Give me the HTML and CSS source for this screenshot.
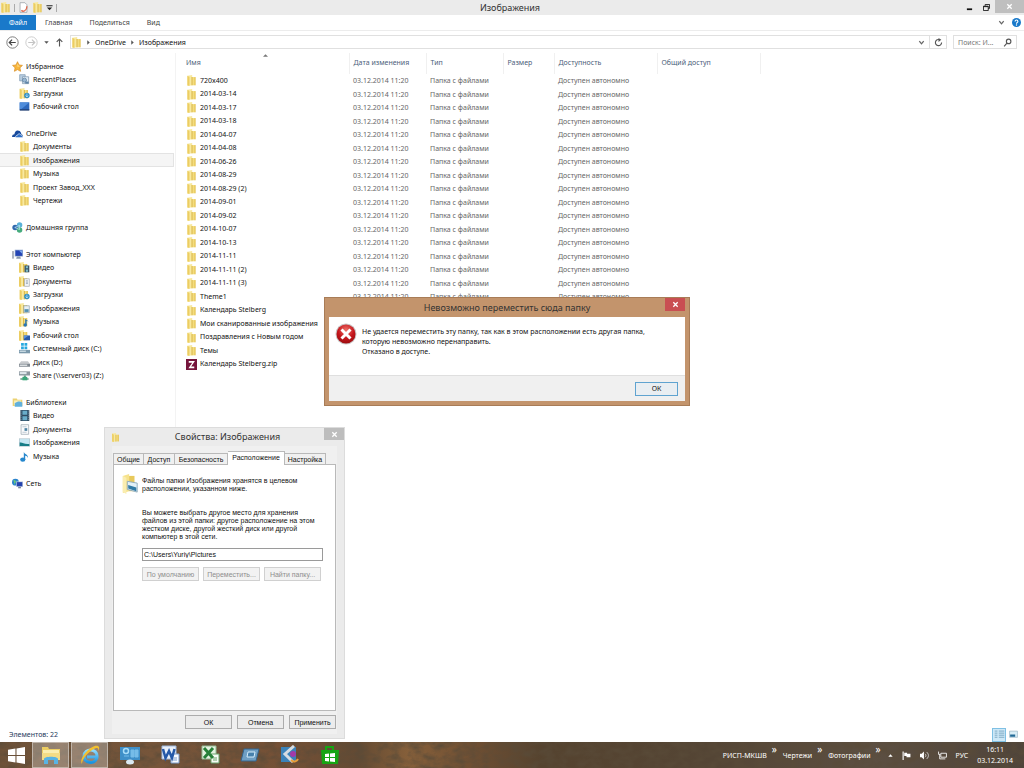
FILE: index.html
```html
<!DOCTYPE html>
<html lang="ru">
<head>
<meta charset="utf-8">
<title>Изображения</title>
<link rel="stylesheet" href="styles.css">
</head>
<body>
<svg class="defs" aria-hidden="true">
  <defs>
    <linearGradient id="gold" x1="0" x2="1"><stop offset="0" stop-color="#fbf0b0"/><stop offset=".5" stop-color="#f3dc7c"/><stop offset="1" stop-color="#e3bf48"/></linearGradient>
    <radialGradient id="red" cx=".5" cy=".3" r=".7"><stop offset="0" stop-color="#f0736a"/><stop offset=".6" stop-color="#c4161c"/><stop offset="1" stop-color="#9c0c10"/></radialGradient>
    <linearGradient id="ie" x1="0" y1="0" x2="0" y2="1"><stop offset="0" stop-color="#8fdcff"/><stop offset="1" stop-color="#1c94e0"/></linearGradient>
    <filter id="grain" x="0" y="0" width="1" height="1"><feTurbulence type="fractalNoise" baseFrequency=".09 .14" numOctaves="4" seed="4"/><feColorMatrix values="0 0 0 0 .1  0 0 0 0 .07  0 0 0 0 .04  1.600 0 0 0 -.55"/></filter>
  </defs>
  <symbol id="folder" viewBox="0 0 16 16"><path d="M2 1l7-1v15l-7 1z" fill="#f8e9a0"/><path d="M8 3h6v12H8z" fill="url(#gold)"/><path d="M2 1l3 2v13l-3-1z" fill="#eccd62"/><path d="M8 3h1.500v12H8z" fill="#d8b23e"/></symbol>
  <symbol id="star" viewBox="0 0 16 16"><path d="M8 1l2.200 4.800 5 .6-3.700 3.500 1 5.100L8 12.500 3.500 15l1-5.100L.8 6.400l5-.6z" fill="#f8b73e" stroke="#d88b1c"/><path d="M8 3.500l1.300 3.300 3 .5-4.300 1z" fill="#ffe59a"/></symbol>
  <symbol id="recent" viewBox="0 0 16 16"><path d="M1 1h8v9H1z" fill="#b9cfe2" stroke="#7d98b0"/><path d="M5 4h9v10H5z" fill="#e4eff8" stroke="#7790a8"/><circle cx="8" cy="9" r="3" fill="#9ab8d3" stroke="#5a7c9b"/><path d="M9 11h5v3H9z" fill="#5d83a6"/></symbol>
  <symbol id="down" viewBox="0 0 16 16"><use href="#folder" x="-1"/><circle cx="11.500" cy="11" r="4" fill="#2f8fc4"/><path d="M11.500 8v5M9.500 11l2 2 2-2" stroke="#cfeeff" fill="none"/></symbol>
  <symbol id="desk" viewBox="0 0 16 16"><path d="M1 2h14v11H1z" fill="#2e69bd"/><path d="M1 2h14L3 12H1z" fill="#4f8ddb"/><path d="M1 12h14v2H1z" fill="#1e3c70"/></symbol>
  <symbol id="cloud" viewBox="0 0 16 16"><path d="M0 13c0-3 2-4 3.500-4C4 5 7 2.500 9.500 4c2.500 0 4 3 4 5 1.500 0 2.500 1.500 2.500 4z" fill="#174a9c"/><path d="M5 14c0-3 2-3.500 3-3.500 1-3 4-2.500 5 0 2 0 3 1.500 3 3.500z" fill="#2e70c8" stroke="#fff"/></symbol>
  <symbol id="home" viewBox="0 0 16 16"><circle cx="11" cy="4.500" r="4" fill="#5ab1d8"/><circle cx="4.500" cy="8" r="4" fill="#3068ac"/><circle cx="11" cy="11.500" r="4" fill="#45ab7d"/><path d="M4 8l7-3v6z" stroke="#c7edf7" fill="none"/></symbol>
  <symbol id="pc" viewBox="0 0 16 16"><path d="M0 3h3v11H0z" fill="#adb4c1"/><path d="M4 1h12v10H4z" fill="#9eb2d0"/><path d="M5 2h10v8H5z" fill="#2444b4"/><path d="M10 2h5v5z" fill="#7fa9ec"/><path d="M7 11h5l1 3H6z" fill="#8a99ad"/></symbol>
  <symbol id="fvideo" viewBox="0 0 16 16"><use href="#folder" x="-2"/><path d="M8 5h7v10H8z" fill="#3b5566"/><path d="M10 6h3v3h-3zm0 5h3v3h-3z" fill="#7fc1cc"/></symbol>
  <symbol id="fdoc" viewBox="0 0 16 16"><use href="#folder" x="-2"/><path d="M8 4h7v11H8z" fill="#f4f6f8" stroke="#a2a8af"/><path d="M10 7h3M10 9h3M10 11h3" stroke="#7f93a8"/></symbol>
  <symbol id="fpic" viewBox="0 0 16 16"><use href="#folder" x="-2"/><path d="M7 4h8v10H7z" fill="#e9f0f4" stroke="#8fa0aa"/><path d="M8 9h6v4H8z" fill="#5391b2"/></symbol>
  <symbol id="fmusic" viewBox="0 0 16 16"><use href="#folder" x="-2"/><path d="M9 13V4l5 4-3-1v6z" fill="#2675b8"/><circle cx="9" cy="13" r="2.500" fill="#2675b8"/></symbol>
  <symbol id="fdesk" viewBox="0 0 16 16"><use href="#folder" x="-2"/><path d="M7 8h9v7H7z" fill="#2759a8"/><path d="M7 8h7l-7 5z" fill="#5b93dd"/></symbol>
  <symbol id="cdrive" viewBox="0 0 16 16"><path d="M3 0h4v4H3zM8 0h4v4H8zM3 5h4v4H3zM8 5h4v4H8z" fill="#27a9df"/><path d="M0 10h16v5H0z" fill="#7b99ac"/><path d="M1 11h9v2H1z" fill="#c9dbe4"/></symbol>
  <symbol id="drive" viewBox="0 0 16 16"><path d="M3 6h10l3 4v4H0v-4z" fill="#c6c9cc"/><path d="M0 10h16v4H0z" fill="#808890"/><path d="M1 11h11v2H1z" fill="#dfe3e6"/></symbol>
  <symbol id="share" viewBox="0 0 16 16"><path d="M0 2h16v6H0z" fill="#8a969e"/><path d="M1 3h10v3H1z" fill="#dfe8ec"/><path d="M7 8h3v4H7zM2 12h12v2H2z" fill="#5f9c84"/><path d="M5 10h7v5H5z" fill="#39a679"/></symbol>
  <symbol id="lib" viewBox="0 0 16 16"><path d="M1 2h6l1 2h7v9H1z" fill="#ecd272"/><path d="M3 5h10v7H3z" fill="#f8efbb"/><path d="M4 9c4-3 8-3 11-1v6H4z" fill="#61b0dc"/></symbol>
  <symbol id="film" viewBox="0 0 16 16"><path d="M2 0h13v16H2z" fill="#2e4c63"/><path d="M5 1h7v6H5zm0 8h7v6H5z" fill="#69adc9"/><path d="M3 1v14M14 1v14" stroke="#c6d7df" stroke-dasharray="1 2"/></symbol>
  <symbol id="doc" viewBox="0 0 16 16"><path d="M3 1h11v14H3z" fill="#fafbfc" stroke="#96a3ac"/><path d="M5 4h6M5 12h6" stroke="#a5b4c0"/><path d="M8 6h4v4H8z" fill="#4e83a3"/></symbol>
  <symbol id="pic" viewBox="0 0 16 16"><path d="M0 2h16v12H0z" fill="#b4c5cd"/><path d="M1 3h14v10H1z" fill="#c5e6f2"/><path d="M1 8c4-1 6 3 14 2v3H1z" fill="#167c86"/></symbol>
  <symbol id="note" viewBox="0 0 16 16"><path d="M7 12V1c1 4 7 4 6 9-1-3-4-3-4-3v6z" fill="#2587cd"/><ellipse cx="5.500" cy="12.500" rx="3.800" ry="3.200" fill="#2587cd"/></symbol>
  <symbol id="net" viewBox="0 0 16 16"><circle cx="5" cy="6" r="5" fill="#2a83cc"/><path d="M2 3c3 0 5 2 3 4s0 3-1 3z" fill="#67c67d"/><path d="M6 5h10v8H6z" fill="#bcc9de"/><path d="M7 6h8v6H7z" fill="#2442ae"/><path d="M9 13h4v2H9z" fill="#75849a"/></symbol>
  <symbol id="zip" viewBox="0 0 16 16"><path d="M0 0h16v16H0z" fill="#76153c"/><path d="M4 3h9l-5.500 8H12v2.500H3.500L9 5.500H4z" fill="#fff"/></symbol>
  <symbol id="x" viewBox="0 0 16 16"><path d="M3 3l10 10M13 3L3 13" stroke="currentColor" stroke-width="3" fill="none"/></symbol>
  <symbol id="chev" viewBox="0 0 16 16"><path d="M3 5l5 6 5-6" stroke="currentColor" stroke-width="3" fill="none"/></symbol>
  <symbol id="arrow" viewBox="0 0 16 16"><path d="M4 1l8 7-8 7z" fill="#555"/></symbol>
</svg>

<main class="explorer">
  <header class="titlebar">
    <div class="quick">
      <svg class="ic11"><use href="#folder"/></svg>
      <span class="bar"></span>
      <svg class="ic11" viewBox="0 0 16 16"><path d="M3 1h7l3 3v11H3z" fill="#fff" stroke="#90989f"/><path d="M5 12c2 3 8 1 8-6" stroke="#e0694e" stroke-width="2" fill="none"/></svg>
      <svg class="ic11"><use href="#folder"/></svg>
      <svg class="ic7" viewBox="0 0 16 16"><path d="M1 3h14v2H1zM2 8h12l-6 6z" fill="#222"/></svg>
      <span class="bar"></span>
    </div>
    <h1 class="wtitle">Изображения</h1>
    <div class="wbtns">
      <button class="wbtn" aria-label="Свернуть"><svg class="ic7" viewBox="0 0 16 16"><path d="M2 10h12v4H2z" fill="#111"/></svg></button>
      <button class="wbtn" aria-label="Восстановить"><svg class="ic7" viewBox="0 0 16 16"><path d="M5 4V1h10v9h-3M1 5h11v10H1zM1 6h11" fill="none" stroke="#111" stroke-width="2"/></svg></button>
      <button class="wbtn wclose" aria-label="Закрыть"><svg class="ic7"><use href="#x"/></svg></button>
    </div>
  </header>
  <nav class="ribbon">
    <button class="rtab file">Файл</button>
    <button class="rtab">Главная</button>
    <button class="rtab">Поделиться</button>
    <button class="rtab">Вид</button>
    <span class="grow"></span>
    <svg class="ic7 gray"><use href="#chev"/></svg>
    <svg class="ic9" viewBox="0 0 16 16"><circle cx="8" cy="8" r="8" fill="#1979ca"/><path d="M5.500 6c0-3.500 5-3 5 0 0 1.500-2.500 2-2.500 4" fill="none" stroke="#fff" stroke-width="2"/><circle cx="8" cy="12.500" r="1.200" fill="#fff"/></svg>
  </nav>
  <div class="address">
    <svg class="ic13" viewBox="0 0 16 16"><circle cx="8" cy="8" r="7" fill="#fff" stroke="#666"/><path d="M12 8H4M7.500 4.500L4 8l3.500 3.500" fill="none" stroke="#444" stroke-width="1.500"/></svg>
    <svg class="ic13" viewBox="0 0 16 16"><circle cx="8" cy="8" r="7" fill="#fff" stroke="#c4c4c4"/><path d="M4 8h8M8.500 4.500L12 8l-3.500 3.500" fill="none" stroke="#c4c4c4" stroke-width="1.500"/></svg>
    <svg class="ic5" viewBox="0 0 16 16"><path d="M1 4h14l-7 8z" fill="#555"/></svg>
    <svg class="ic9" viewBox="0 0 16 16"><path d="M8 15V2M3 7l5-5 5 5" fill="none" stroke="#555" stroke-width="2"/></svg>
    <div class="crumbs">
      <svg class="ic11"><use href="#folder"/></svg>
      <svg class="ic5"><use href="#arrow"/></svg>
      <a class="crumb" href="#">OneDrive</a>
      <svg class="ic5"><use href="#arrow"/></svg>
      <a class="crumb" href="#">Изображения</a>
      <span class="grow"></span>
      <svg class="ic7 gray"><use href="#chev"/></svg>
      <button class="refresh" aria-label="Обновить"><svg class="ic9" viewBox="0 0 16 16"><path d="M10 3a5.500 5.500 0 1 0 3.500 5" fill="none" stroke="#555" stroke-width="2"/><path d="M8 0l5 3-5 4z" fill="#555"/></svg></button>
    </div>
    <label class="search"><input class="sinput" type="text" placeholder="Поиск: И..." aria-label="Поиск"><svg class="ic9" viewBox="0 0 16 16"><circle cx="10" cy="6" r="4" fill="none" stroke="#555" stroke-width="2"/><path d="M7 9l-5 6" stroke="#555" stroke-width="2"/></svg></label>
  </div>
  <div class="body">
    <nav class="tree">
      <ul class="group">
        <li class="node head"><svg class="ic11"><use href="#star"/></svg>Избранное</li>
        <li class="node"><svg class="ic11"><use href="#recent"/></svg>RecentPlaces</li>
        <li class="node"><svg class="ic11"><use href="#down"/></svg>Загрузки</li>
        <li class="node"><svg class="ic11"><use href="#desk"/></svg>Рабочий стол</li>
      </ul>
      <ul class="group">
        <li class="node head"><svg class="ic11"><use href="#cloud"/></svg>OneDrive</li>
        <li class="node"><svg class="ic11"><use href="#folder"/></svg>Документы</li>
        <li class="node current"><svg class="ic11"><use href="#folder"/></svg>Изображения</li>
        <li class="node"><svg class="ic11"><use href="#folder"/></svg>Музыка</li>
        <li class="node"><svg class="ic11"><use href="#folder"/></svg>Проект Завод_XXX</li>
        <li class="node"><svg class="ic11"><use href="#folder"/></svg>Чертежи</li>
      </ul>
      <ul class="group">
        <li class="node head"><svg class="ic11"><use href="#home"/></svg>Домашняя группа</li>
      </ul>
      <ul class="group">
        <li class="node head"><svg class="ic11"><use href="#pc"/></svg>Этот компьютер</li>
        <li class="node"><svg class="ic11"><use href="#fvideo"/></svg>Видео</li>
        <li class="node"><svg class="ic11"><use href="#fdoc"/></svg>Документы</li>
        <li class="node"><svg class="ic11"><use href="#down"/></svg>Загрузки</li>
        <li class="node"><svg class="ic11"><use href="#fpic"/></svg>Изображения</li>
        <li class="node"><svg class="ic11"><use href="#fmusic"/></svg>Музыка</li>
        <li class="node"><svg class="ic11"><use href="#fdesk"/></svg>Рабочий стол</li>
        <li class="node"><svg class="ic11"><use href="#cdrive"/></svg>Системный диск (C:)</li>
        <li class="node"><svg class="ic11"><use href="#drive"/></svg>Диск (D:)</li>
        <li class="node"><svg class="ic11"><use href="#share"/></svg>Share (\\server03) (Z:)</li>
      </ul>
      <ul class="group">
        <li class="node head"><svg class="ic11"><use href="#lib"/></svg>Библиотеки</li>
        <li class="node"><svg class="ic11"><use href="#film"/></svg>Видео</li>
        <li class="node"><svg class="ic11"><use href="#doc"/></svg>Документы</li>
        <li class="node"><svg class="ic11"><use href="#pic"/></svg>Изображения</li>
        <li class="node"><svg class="ic11"><use href="#note"/></svg>Музыка</li>
      </ul>
      <ul class="group">
        <li class="node head"><svg class="ic11"><use href="#net"/></svg>Сеть</li>
      </ul>
    </nav>
    <section class="files">
      <svg class="sort" viewBox="0 0 16 8"><path d="M0 8l8-8 8 8z" fill="#777"/></svg>
      <table class="list">
        <colgroup><col class="cname"><col class="cdate"><col class="cdate"><col class="csize"><col class="cavail"><col class="cavail"></colgroup>
        <thead><tr><th>Имя</th><th>Дата изменения</th><th>Тип</th><th>Размер</th><th>Доступность</th><th>Общий доступ</th></tr></thead>
        <tbody>
        <tr><td><svg class="ic11"><use href="#folder"/></svg>720x400</td><td>03.12.2014 11:20</td><td>Папка с файлами</td><td></td><td>Доступен автономно</td><td></td></tr>
        <tr><td><svg class="ic11"><use href="#folder"/></svg>2014-03-14</td><td>03.12.2014 11:20</td><td>Папка с файлами</td><td></td><td>Доступен автономно</td><td></td></tr>
        <tr><td><svg class="ic11"><use href="#folder"/></svg>2014-03-17</td><td>03.12.2014 11:20</td><td>Папка с файлами</td><td></td><td>Доступен автономно</td><td></td></tr>
        <tr><td><svg class="ic11"><use href="#folder"/></svg>2014-03-18</td><td>03.12.2014 11:20</td><td>Папка с файлами</td><td></td><td>Доступен автономно</td><td></td></tr>
        <tr><td><svg class="ic11"><use href="#folder"/></svg>2014-04-07</td><td>03.12.2014 11:20</td><td>Папка с файлами</td><td></td><td>Доступен автономно</td><td></td></tr>
        <tr><td><svg class="ic11"><use href="#folder"/></svg>2014-04-08</td><td>03.12.2014 11:20</td><td>Папка с файлами</td><td></td><td>Доступен автономно</td><td></td></tr>
        <tr><td><svg class="ic11"><use href="#folder"/></svg>2014-06-26</td><td>03.12.2014 11:20</td><td>Папка с файлами</td><td></td><td>Доступен автономно</td><td></td></tr>
        <tr><td><svg class="ic11"><use href="#folder"/></svg>2014-08-29</td><td>03.12.2014 11:20</td><td>Папка с файлами</td><td></td><td>Доступен автономно</td><td></td></tr>
        <tr><td><svg class="ic11"><use href="#folder"/></svg>2014-08-29 (2)</td><td>03.12.2014 11:20</td><td>Папка с файлами</td><td></td><td>Доступен автономно</td><td></td></tr>
        <tr><td><svg class="ic11"><use href="#folder"/></svg>2014-09-01</td><td>03.12.2014 11:20</td><td>Папка с файлами</td><td></td><td>Доступен автономно</td><td></td></tr>
        <tr><td><svg class="ic11"><use href="#folder"/></svg>2014-09-02</td><td>03.12.2014 11:20</td><td>Папка с файлами</td><td></td><td>Доступен автономно</td><td></td></tr>
        <tr><td><svg class="ic11"><use href="#folder"/></svg>2014-10-07</td><td>03.12.2014 11:20</td><td>Папка с файлами</td><td></td><td>Доступен автономно</td><td></td></tr>
        <tr><td><svg class="ic11"><use href="#folder"/></svg>2014-10-13</td><td>03.12.2014 11:20</td><td>Папка с файлами</td><td></td><td>Доступен автономно</td><td></td></tr>
        <tr><td><svg class="ic11"><use href="#folder"/></svg>2014-11-11</td><td>03.12.2014 11:20</td><td>Папка с файлами</td><td></td><td>Доступен автономно</td><td></td></tr>
        <tr><td><svg class="ic11"><use href="#folder"/></svg>2014-11-11 (2)</td><td>03.12.2014 11:20</td><td>Папка с файлами</td><td></td><td>Доступен автономно</td><td></td></tr>
        <tr><td><svg class="ic11"><use href="#folder"/></svg>2014-11-11 (3)</td><td>03.12.2014 11:20</td><td>Папка с файлами</td><td></td><td>Доступен автономно</td><td></td></tr>
        <tr><td><svg class="ic11"><use href="#folder"/></svg>Theme1</td><td>03.12.2014 11:20</td><td>Папка с файлами</td><td></td><td>Доступен автономно</td><td></td></tr>
        <tr><td><svg class="ic11"><use href="#folder"/></svg>Календарь Stelberg</td><td colspan="5"></td></tr>
        <tr><td><svg class="ic11"><use href="#folder"/></svg>Мои сканированные изображения</td><td colspan="5"></td></tr>
        <tr><td><svg class="ic11"><use href="#folder"/></svg>Поздравления с Новым годом</td><td colspan="5"></td></tr>
        <tr><td><svg class="ic11"><use href="#folder"/></svg>Темы</td><td colspan="5"></td></tr>
        <tr><td><svg class="ic11"><use href="#zip"/></svg>Календарь Stelberg.zip</td><td colspan="5"></td></tr>
        </tbody>
      </table>
    </section>
  </div>
  <footer class="status">
    <span class="count">Элементов: 22</span>
    <button class="view on" aria-label="Таблица"><svg class="ic11" viewBox="0 0 16 16"><path d="M1 3h4M1 6h4M1 9h4M1 12h4M7 3h8M7 6h8M7 9h8M7 12h8" stroke="#5d8fae"/></svg></button>
    <button class="view" aria-label="Крупные значки"><svg class="ic9" viewBox="0 0 16 16"><path d="M1 2h14v11H1z" fill="#d9eef7" stroke="#8aa5b5"/><path d="M2 8h9v4H2z" fill="#236a96"/></svg></button>
  </footer>
</main>

<section class="win props" role="dialog" aria-labelledby="ptitle">
  <header class="phead">
    <svg class="ic9"><use href="#folder"/></svg>
    <h2 class="wtitle" id="ptitle">Свойства: Изображения</h2>
    <button class="pclose" aria-label="Закрыть"><svg class="ic7"><use href="#x"/></svg></button>
  </header>
  <div class="pbody">
    <div class="tabs">
      <button class="tab t1">Общие</button><button class="tab t1">Доступ</button><button class="tab t2">Безопасность</button><button class="tab t3 sel">Расположение</button><button class="tab t4">Настройка</button>
    </div>
    <div class="page">
      <svg class="bigfolder" viewBox="0 0 20 22"><path d="M2 2l7-2v19l-7 2z" fill="#f6e28c"/><path d="M9 2h6v17H9z" fill="#e8c95c"/><path d="M2 2l4 2v18l-4-2z" fill="#faedb0"/><path d="M7 8l11 2v10L7 17z" fill="#e3f1f8" stroke="#8ba8b8"/><path d="M8 12l9 3v4l-9-3z" fill="#327ba5"/></svg>
      <div class="pcol">
        <p class="ptext">Файлы папки Изображения хранятся в целевом<br>расположении, указанном ниже.</p>
        <p class="ptext">Вы можете выбрать другое место для хранения<br>файлов из этой папки: другое расположение на этом<br>жестком диске, другой жесткий диск или другой<br>компьютер в этой сети.</p>
        <input class="path" type="text" value="C:\Users\Yuriy\Pictures" aria-label="Путь">
        <div class="pbtns"><button class="btn" disabled>По умолчанию</button><button class="btn" disabled>Переместить...</button><button class="btn" disabled>Найти папку...</button></div>
      </div>
    </div>
    <div class="actions"><button class="btn">ОК</button><button class="btn">Отмена</button><button class="btn">Применить</button></div>
  </div>
</section>

<section class="win err" role="alertdialog" aria-labelledby="etitle">
  <header class="ehead">
    <h2 class="wtitle" id="etitle">Невозможно переместить сюда папку</h2>
    <button class="eclose" aria-label="Закрыть"><svg class="ic7"><use href="#x"/></svg></button>
  </header>
  <div class="emsg">
    <svg class="eicon" viewBox="0 0 22 22"><circle cx="11" cy="11" r="10.500" fill="#c9c5c5"/><circle cx="11" cy="11" r="9.500" fill="url(#red)"/><path d="M6.500 6.500l9 9M15.500 6.500l-9 9" stroke="#fff" stroke-width="3"/></svg>
    <p class="etext">Не удается переместить эту папку, так как в этом расположении есть другая папка,<br>которую невозможно перенаправить.<br>Отказано в доступе.</p>
  </div>
  <div class="efoot"><button class="ok">ОК</button></div>
</section>

<footer class="taskbar">
  <svg class="texture" aria-hidden="true"><rect width="100%" height="100%" filter="url(#grain)"/></svg>
  <button class="task start" aria-label="Пуск"><svg class="ic17" viewBox="0 0 16 16"><path d="M0 2.500L7 1.500v6H0zM8 1.300L16 0v7.500H8zM0 8.500h7v6l-7-1zM8 8.500h8V16l-8-1.300z" fill="#fff"/></svg></button>
  <button class="task open" aria-label="Проводник"><svg class="ic20" viewBox="0 0 20 20"><path d="M1 2h6l1 2h11v11H1z" fill="#eccd62"/><path d="M2 5h16v9H2z" fill="#fbeeb0"/><path d="M1 8h18v7H1z" fill="#f4dc85"/><path d="M3 19v-5c0-3 14-3 14 0v5h-4v-4H7v4z" fill="#58b3e4"/></svg></button>
  <button class="task open" aria-label="Internet Explorer"><svg class="ic20" viewBox="0 0 20 20"><path d="M17 13c-3 7-13 5-13-2 0-8 14-8 13 1H7" fill="none" stroke="url(#ie)" stroke-width="3"/><path d="M2 19C-2 14 11-1 18 1c2 1 1 4 0 5 1-3-1-4-4-2C8 7 2 14 2 19z" fill="#f3c02e"/></svg></button>
  <button class="task" aria-label="Панель управления"><svg class="ic20" viewBox="0 0 20 20"><path d="M0 2h20v13H0z" fill="#3f8fc8"/><circle cx="6" cy="6" r="2.500" fill="none" stroke="#a8dcf8" stroke-width="1.500"/><path d="M4 11h5M11 5h3v7h-3zM15 5h3v7h-3z" fill="#76bce8" stroke="#76bce8"/><ellipse cx="10" cy="17" rx="4" ry="2.500" fill="#dbe9f2"/></svg></button>
  <button class="task" aria-label="Word"><svg class="ic20" viewBox="0 0 20 20"><path d="M2 1h14v13H2z" fill="#e9f0fa" stroke="#9fb8dc"/><path d="M11 9h8v9h-8z" fill="#f7faff" stroke="#7d9ccc"/><path d="M3 4l2.500 9L9 6l3 7 2.500-9" fill="none" stroke="#2458a8" stroke-width="2.500"/><path d="M13 13h4M13 15h4" stroke="#7d9ccc"/></svg></button>
  <button class="task" aria-label="Excel"><svg class="ic20" viewBox="0 0 20 20"><path d="M2 1h14v13H2z" fill="#e4f2e1" stroke="#93ba91"/><path d="M11 9h8v9h-8z" fill="#f6fbf5" stroke="#6aa46d"/><path d="M4 3l9 10M13 3L4 13" fill="none" stroke="#278038" stroke-width="3"/><path d="M13 13h4M13 15h4" stroke="#6aa46d"/></svg></button>
  <button class="task" aria-label="Окно"><svg class="ic20" viewBox="0 0 20 20"><path d="M4 4h15l-3 12H1z" fill="#6f9fc4" stroke="#34648c"/><path d="M8 7h7l-1 5H7z" fill="#4680ac" stroke="#d5edfb"/></svg></button>
  <button class="task" aria-label="Графика"><svg class="ic20" viewBox="0 0 20 20"><path d="M1 2h15v15H1z" fill="#3b83ba"/><path d="M14 1L5 9l8 8" fill="none" stroke="#d5dce2" stroke-width="3"/><circle cx="13" cy="9" r="3" fill="#a23ba9"/><path d="M11 15c3 3 6 1 7-1" stroke="#e89e37" stroke-width="2" fill="none"/></svg></button>
  <button class="task" aria-label="Магазин"><svg class="ic20" viewBox="0 0 20 20"><path d="M1 5h18l-1 14H2z" fill="#16a513"/><path d="M6 6V2h7v4" fill="none" stroke="#16a513" stroke-width="2"/><path d="M5 9l4-.5V12H5zM10 8.500l5-.5v4h-5zM5 13h4v3.500L5 16zM10 13h5v4l-5-.5z" fill="#fff"/></svg></button>
  <span class="grow"></span>
  <div class="bars">
    <span class="tbar">РИСП-МКШВ<span class="more">»</span></span>
    <span class="tbar">Чертежи<span class="more">»</span></span>
    <span class="tbar">Фотографии<span class="more">»</span></span>
  </div>
  <div class="tray">
    <svg class="ic5" viewBox="0 0 16 16"><path d="M1 12h14L8 4z" fill="#fff"/></svg>
    <svg class="ic9" viewBox="0 0 16 16"><path d="M1 1h2v15H1zM4 3h5v2h6v6H8V9H4z" fill="#fff"/></svg>
    <svg class="ic9" viewBox="0 0 16 16"><path d="M0 5h3l4-4v14l-4-4H0z" fill="#fff"/><path d="M9 5c2 2 2 4 0 6M12 2c4 4 4 8 0 12" fill="none" stroke="#ddd" stroke-width="1.500"/></svg>
    <svg class="ic9" viewBox="0 0 16 16"><path d="M5 4h10v7H5zM7 14h6M1 1v5h3M3 6v8h4" fill="none" stroke="#fff" stroke-width="1.500"/></svg>
    <span class="lang">РУС</span>
    <time class="clock">16:11<br>03.12.2014</time>
  </div>
</footer>
</body>
</html>
```
FILE: styles.css
```css
* { box-sizing: border-box; }
body { margin: 0; min-height: 100vh; display: flex; flex-direction: column; background: #fff; color: #111; font: 7px/9px "Noto Sans", "Open Sans", sans-serif; overflow: hidden; }
button, input { font: inherit; color: inherit; margin: 0; padding: 0; border: 0; background: none; border-radius: 0; }
svg { flex: none; display: block; }
p, h1, h2, ul { margin: 0; padding: 0; font-weight: 400; list-style: none; }
.defs { position: absolute; width: 0; height: 0; }
.grow { flex: 1; }
.ic5 { width: 5px; height: 5px; }
.ic7 { width: 7px; height: 7px; }
.ic9 { width: 9px; height: 9px; }
.ic11 { width: 11px; height: 11px; }
.ic13 { width: 13px; height: 13px; }
.ic17 { width: 17px; height: 17px; }
.ic20 { width: 20px; height: 20px; }
.gray { color: #666; }

.explorer { flex: 1; display: flex; flex-direction: column; }
.titlebar { display: grid; grid-template-columns: 1fr auto 1fr; align-items: center; height: 15px; padding-right: 4px; background: #ebebeb; }
.quick { display: flex; align-items: center; gap: 3px; }
.bar { width: 1px; height: 8px; background: #aaa; }
.wtitle { font-size: 9px; line-height: 14px; color: #333; }
.wbtns { display: flex; justify-content: flex-end; height: 100%; margin-right: -4px; }
.wbtn { width: 17px; display: flex; align-items: center; justify-content: center; }
.wclose { width: 29px; height: 13px; background: #bfbfbf; color: #fff; }
.ribbon { display: flex; align-items: center; height: 16px; padding-right: 3px; gap: 7px; border-bottom: 1px solid #ececec; color: #444; }
.rtab { padding: 0 2px; }
.rtab + .rtab { margin-left: 6px; }
.file { width: 36px; height: 15px; background: #1979ca; color: #fff; padding: 0; }
.ribbon .file + .rtab { margin-left: 0; }
.address { display: flex; align-items: center; height: 22px; padding: 0 7px 0 6px; gap: 6px; }
.crumbs { flex: 1; display: flex; align-items: center; gap: 4px; height: 14px; border: 1px solid #e0e0e0; }
.crumb { color: #111; text-decoration: none; }
.refresh { width: 17px; height: 12px; display: flex; align-items: center; justify-content: center; border-left: 1px solid #e0e0e0; }
.search { width: 64px; height: 14px; display: flex; align-items: center; border: 1px solid #e0e0e0; padding: 0 4px; }
.sinput { flex: 1; min-width: 0; outline: 0; }
.sinput::placeholder { color: #777; opacity: 1; }

.body { flex: 1; display: flex; }
.tree { width: 176px; border-right: 1px solid #f3f3f3; padding-top: 6px; }
.group { margin-bottom: 13px; }
.node { display: flex; align-items: center; gap: 3px; height: 13px; padding-left: 19px; margin-right: 1px; white-space: nowrap; }
.node:nth-child(odd) { height: 14px; }
.head { padding-left: 12px; }
.current { background: #f5f5f5; border: 1px solid #e3e3e3; border-left: 0; }
.files { flex: 1; padding-left: 6px; position: relative; }
.sort { position: absolute; left: 87px; top: 1px; width: 5px; height: 3px; }
.list { table-layout: fixed; width: 578px; border-collapse: collapse; color: #666; }
.cname { width: 167px; }
.cdate { width: 77px; }
.csize { width: 51px; }
.cavail { width: 103px; }
.list th { height: 21px; padding: 0 0 3px 4px; font-weight: 400; text-align: left; color: #4c607a; border-right: 1px solid #f0f0f0; }
.list td { height: 13px; padding: 0 0 0 4px; white-space: nowrap; }
.list tr:nth-child(even) td { height: 14px; }
.list td:first-child { color: #111; }
.list td svg { display: inline-block; vertical-align: middle; margin: -2px 3px -1px 0; }

.status { display: flex; align-items: center; height: 15px; padding: 0 4px 0 9px; color: #1e395b; }
.count { flex: 1; }
.view { width: 14px; height: 14px; display: flex; align-items: center; justify-content: center; border: 1px solid transparent; }
.on { background: #cde8f7; border-color: #7fc0e4; }

.win { position: absolute; display: flex; flex-direction: column; }
.props { left: 104px; top: 427px; width: 241px; background: #ebebeb; border: 1px solid #dcdcdc; }
.phead { display: grid; grid-template-columns: 20px 1fr 20px; align-items: center; height: 18px; padding-left: 6px; text-align: center; }
.pclose { align-self: start; height: 12px; background: #bdbdbd; color: #fff; display: flex; align-items: center; justify-content: center; }
.pbody { margin: 0 7px 4px; padding: 5px 1px; background: #f0f0f0; font-family: "Liberation Sans", Arial, sans-serif; color: #111; }
.tabs { display: flex; align-items: flex-end; }
.tab { height: 11px; border: 1px solid #b9b9b9; border-bottom: 0; background: #f0f0f0; }
.tab + .tab { border-left: 0; }
.t1 { width: 31px; }
.t2 { width: 53px; }
.t3 { width: 57px; }
.t4 { width: 41px; }
.tabs .sel { height: 14px; background: #fff; padding-bottom: 2px; margin-bottom: -1px; z-index: 1; }
.page { display: flex; gap: 3px; min-height: 247px; padding: 9px 7px; border: 1px solid #b9b9b9; background: #fff; }
.bigfolder { width: 18px; height: 20px; }
.pcol { flex: 1; padding-top: 3px; }
.ptext { line-height: 8px; white-space: nowrap; margin-bottom: 16px; }
.ptext + .ptext { margin-bottom: 7px; }
.path { display: block; width: 181px; height: 13px; border: 1px solid #9a9a9a; padding: 0 1px; background: #fff; }
.pbtns { display: flex; gap: 4px; margin-top: 6px; }
.btn { width: 57px; height: 14px; border: 1px solid #acacac; background: #ececec; white-space: nowrap; }
.btn:disabled { border-color: #d0d0d0; background: #f2f2f2; color: #8e8e8e; }
.actions { display: flex; justify-content: flex-end; gap: 5px; padding-top: 4px; }
.actions .btn { width: 47px; }

.err { left: 324px; top: 297px; width: 366px; background: #c3946c; border: 1px solid #a87c57; padding: 0 4px 4px; }
.ehead { display: grid; grid-template-columns: 20px 1fr 20px; align-items: center; height: 19px; text-align: center; }
.ehead .wtitle { grid-column: 2; }
.eclose { align-self: start; height: 13px; background: #c94f52; color: #fff; display: flex; align-items: center; justify-content: center; }
.emsg { display: flex; gap: 5px; height: 58px; padding: 6px; background: #fff; color: #111; }
.eicon { width: 22px; height: 22px; }
.etext { padding-top: 4px; line-height: 10px; white-space: nowrap; }
.efoot { display: flex; justify-content: flex-end; align-items: center; height: 26px; padding: 0 7px; background: #f0f0f0; border-top: 1px solid #dfdfdf; }
.ok { width: 43px; height: 14px; border: 1px solid #5fa3d0; background: #e9eef2; }

.taskbar { position: relative; display: flex; align-items: stretch; height: 26px; color: #fff; background: linear-gradient(90deg, #6e5238, #76553a 15%, #745036 28%, #634a33 35%, #87603a 40%, #6f4f33 46%, #55432f 53%, #544535 70%, #5c4f42 85%, #4f443a); }
.texture { position: absolute; inset: 0; width: 100%; height: 100%; }
.task, .bars, .tray { position: relative; }
.task { width: 40px; display: flex; align-items: center; justify-content: center; }
.start { width: 32px; }
.open { width: 37px; margin-right: 2px; background: rgba(255, 255, 255, .28); border: 1px solid rgba(255, 255, 255, .4); }
.bars { display: flex; align-items: center; gap: 6px; }
.tbar { display: flex; align-items: center; gap: 5px; }
.more { font-size: 10px; padding-bottom: 12px; }
.tray { display: flex; align-items: center; gap: 9px; padding: 0 11px 0 7px; }
.clock { text-align: center; line-height: 11px; }
```
